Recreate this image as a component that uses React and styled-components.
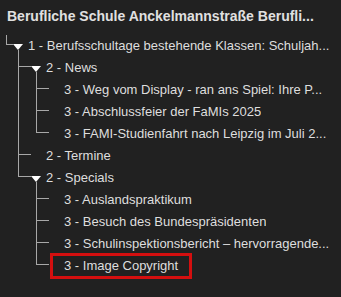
import React from 'react'
import styled, { createGlobalStyle } from 'styled-components'

const GlobalStyle = createGlobalStyle`
html, body {
    margin: 0;
    padding: 0;
    background: #212121;
}
body {
    font-family: "Liberation Sans", Arial, sans-serif;
    color: #dedede;
}
`

const Panel = styled.div`
width: 341px;
height: 297px;
overflow: hidden;
padding: 6px 6px 0 0;
box-sizing: border-box;
background: #212121;
`
const Title = styled.h1`
margin: 0 0 9px 7px;
font-size: 14px;
font-weight: bold;
line-height: 20px;
white-space: nowrap;
overflow: hidden;
text-overflow: ellipsis;
color: #e0e0e0;
`
const List = styled.ul`
list-style: none;
margin: 0;
padding: 0 0 0 ${p => p.$indent}px;
`
const Node = styled.li`
position: relative;
&::before {
    content: '';
    position: absolute;
    left: -${p => p.$reach}px;
    top: 9px;
    width: ${p => p.$reach}px;
    height: 1px;
    background: #a8a8a8;
}
&::after {
    content: '';
    position: absolute;
    left: -${p => p.$reach}px;
    top: ${p => (p.$first && !p.$root ? -7 : 0)}px;
    width: 1px;
    height: ${p => (p.$last ? `${p.$first && !p.$root ? 17 : 10}px` : `calc(100% + ${p.$first && !p.$root ? 7 : 0}px)`)};
    background: #a8a8a8;
}
`
const Row = styled.div`
display: flex;
align-items: flex-start;
height: 22px;
min-width: 0;
`
const Toggle = styled.span`
flex: 0 0 10px;
height: 6px;
margin-top: 9px;
box-sizing: border-box;
border-left: 5px solid transparent;
border-right: 5px solid transparent;
border-top: ${p => (p.$open ? '6px solid #ffffff' : '0')};
`
const Label = styled.span`
margin-left: -7px;
padding: ${p => (p.$active ? '0 12px' : '0 0 0 12px')};
height: 22px;
line-height: 22px;
font-size: 13px;
white-space: nowrap;
overflow: hidden;
text-overflow: ellipsis;
min-width: 0;
outline: ${p => (p.$active ? '3px solid #d40f0f' : 'none')};
outline-offset: -1px;
`

const tree = [
    {
        label: '1 - Berufsschultage bestehende Klassen: Schuljah...',
        children: [
            {
                label: '2 - News',
                children: [
                    { label: '3 - Weg vom Display - ran ans Spiel: Ihre P...' },
                    { label: '3 - Abschlussfeier der FaMIs 2025' },
                    { label: '3 - FAMI-Studienfahrt nach Leipzig im Juli 2...' },
                ],
            },
            { label: '2 - Termine' },
            {
                label: '2 - Specials',
                children: [
                    { label: '3 - Auslandspraktikum' },
                    { label: '3 - Besuch des Bundespräsidenten' },
                    { label: '3 - Schulinspektionsbericht – hervorragende...' },
                    { label: '3 - Image Copyright', active: true },
                ],
            },
        ],
    },
]

function Branch({ items, depth }) {
    return (
        <List $indent={depth === 0 ? 13 : 18}>
            {items.map((item, i) => (
                <Node
                    key={item.label}
                    $root={depth === 0}
                    $reach={depth === 0 ? 7 : 13}
                    $first={i === 0}
                    $last={i === items.length - 1}
                >
                    <Row>
                        <Toggle $open={!!item.children} />
                        <Label $active={item.active}>{item.label}</Label>
                    </Row>
                    {item.children && <Branch items={item.children} depth={depth + 1} />}
                </Node>
            ))}
        </List>
    )
}

export default function App() {
    return (
        <>
            <GlobalStyle />
            <Panel>
                <Title>Berufliche Schule Anckelmannstraße Berufli...</Title>
                <Branch items={tree} depth={0} />
            </Panel>
        </>
    )
}
